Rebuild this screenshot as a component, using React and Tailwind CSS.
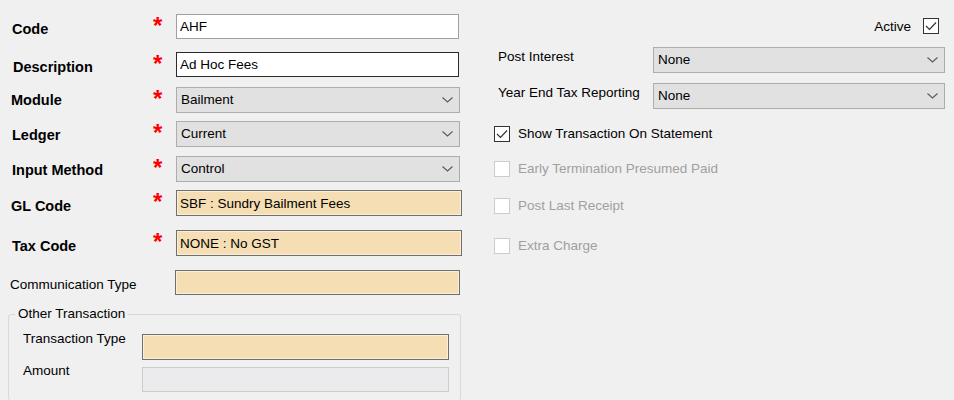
import React from 'react';

const font = 'font-["Liberation_Sans",Arial,sans-serif]';

function Chevron() {
  return (
    <svg width="11" height="6" viewBox="0 0 11 6" className="shrink-0">
      <polyline points="0.5,0.5 5.5,5 10.5,0.5" fill="none" stroke="#5a5a5a" strokeWidth="1.1" />
    </svg>
  );
}

function Check({ checked, disabled }) {
  return (
    <span
      className={
        'flex h-[16px] w-[16px] shrink-0 items-center justify-center bg-white border ' +
        (disabled ? 'border-[#cccccc]' : 'border-[#333333]')
      }
    >
      {checked && (
        <svg width="12" height="10" viewBox="0 0 12 10">
          <polyline points="1,5 4.5,8.5 11,1.5" fill="none" stroke="#333333" strokeWidth="1.2" />
        </svg>
      )}
    </span>
  );
}

function Combo({ value, className }) {
  return (
    <div
      className={
        'flex items-center justify-between border border-[#adadad] bg-[#e1e1e1] pl-[4px] pr-[6px] text-[13.5px] text-black ' +
        className
      }
    >
      <span>{value}</span>
      <Chevron />
    </div>
  );
}

function TextBox({ value, variant, className }) {
  const styles = {
    plain: 'border-[#a0a0a0] bg-white',
    focus: 'border-[#2b2b2b] bg-white',
    lookup: 'border-[#6e6e6e] bg-[#f5deb3] shadow-[inset_0_0_0_1px_#fcefd9]',
    disabled: 'border-[#cccccc] bg-[#ebebee]',
  };
  return (
    <input
      readOnly
      value={value}
      className={
        'border px-[3px] text-[13.5px] text-black outline-none ' + styles[variant] + ' ' + className
      }
    />
  );
}

function Required() {
  return (
    <span className="w-[23px] shrink-0 self-start text-[24px] font-bold leading-none text-[#ff0000]">*</span>
  );
}

function FieldRow({ label, labelClass, rowClass, children }) {
  return (
    <div className={'flex items-center ' + rowClass}>
      <div className={'w-[153px] shrink-0 text-[14.5px] font-bold text-black ' + labelClass}>{label}</div>
      <Required />
      {children}
    </div>
  );
}

function CheckRow({ label, checked, disabled, rowClass }) {
  return (
    <div className={'flex items-center gap-[8px] ' + rowClass}>
      <Check checked={checked} disabled={disabled} />
      <span className={'text-[13.5px] ' + (disabled ? 'text-[#a0a0a0]' : 'text-black')}>{label}</span>
    </div>
  );
}

export default function App() {
  return (
    <div className={'flex h-[400px] w-[954px] overflow-hidden bg-[#f0f0f0] ' + font}>
      {/* left column: transaction code fields */}
      <div className="flex w-[470px] shrink-0 flex-col pt-[14px]">
        <FieldRow label="Code" labelClass="pl-[12px] pt-[7px]" rowClass="h-[25px]">
          <TextBox value="AHF" variant="plain" className="h-[25px] w-[283px]" />
        </FieldRow>
        <FieldRow label="Description" labelClass="pl-[13px] pt-[7px]" rowClass="mt-[13px] h-[25px]">
          <TextBox value="Ad Hoc Fees" variant="focus" className="h-[25px] w-[283px]" />
        </FieldRow>
        <FieldRow label="Module" labelClass="pl-[11px] pt-[2px]" rowClass="mt-[10px] h-[26px]">
          <Combo value="Bailment" className="h-[26px] w-[284px]" />
        </FieldRow>
        <FieldRow label="Ledger" labelClass="pl-[12px] pt-[4px]" rowClass="mt-[8px] h-[26px]">
          <Combo value="Current" className="h-[26px] w-[284px]" />
        </FieldRow>
        <FieldRow label="Input Method" labelClass="pl-[12px] pt-[4px]" rowClass="mt-[9px] h-[26px]">
          <Combo value="Control" className="h-[26px] w-[284px]" />
        </FieldRow>
        <FieldRow label="GL Code" labelClass="pl-[11px] pt-[8px]" rowClass="mt-[8px] h-[26px]">
          <TextBox value="SBF : Sundry Bailment Fees" variant="lookup" className="h-[26px] w-[286px]" />
        </FieldRow>
        <FieldRow label="Tax Code" labelClass="pl-[12px] pt-[8px]" rowClass="mt-[14px] h-[26px]">
          <TextBox value="NONE : No GST" variant="lookup" className="h-[26px] w-[286px]" />
        </FieldRow>
        <div className="mt-[14px] flex h-[25px] items-center">
          <div className="w-[175px] shrink-0 pl-[10px] pt-[6px] text-[13.5px] text-black">Communication Type</div>
          <TextBox value="" variant="lookup" className="h-[25px] w-[285px]" />
        </div>

        <fieldset className="mt-[11px] ml-[8px] w-[453px] rounded-[3px] border border-[#d9d9d9] pb-[8px]">
          <legend className="ml-[6px] px-[3px] text-[13.5px] leading-[16px] text-black">Other Transaction</legend>
          <div className="mt-[12px] flex items-start">
            <div className="-mt-[3px] w-[133px] shrink-0 pl-[14px] text-[13.5px] leading-[16px] text-black">Transaction Type</div>
            <TextBox value="" variant="lookup" className="h-[26px] w-[307px]" />
          </div>
          <div className="mt-[7px] flex items-start">
            <div className="-mt-[4px] w-[133px] shrink-0 pl-[14px] text-[13.5px] leading-[16px] text-black">Amount</div>
            <TextBox value="" variant="disabled" className="h-[25px] w-[307px]" />
          </div>
        </fieldset>
      </div>

      {/* right column: posting options */}
      <div className="ml-[24px] flex w-[452px] shrink-0 flex-col pt-[18px]">
        <div className="flex h-[16px] items-center justify-end gap-[12px] pr-[7px]">
          <span className="pt-[2px] text-[13.5px] text-black">Active</span>
          <Check checked />
        </div>
        <div className="mt-[13px] flex h-[26px] items-start">
          <div className="w-[159px] shrink-0 pl-[4px] text-[13.5px] text-black">Post Interest</div>
          <Combo value="None" className="h-[26px] w-[292px]" />
        </div>
        <div className="mt-[10px] flex h-[26px] items-start">
          <div className="w-[159px] shrink-0 pl-[4px] text-[13.5px] text-black">Year End Tax Reporting</div>
          <Combo value="None" className="h-[26px] w-[292px]" />
        </div>
        <CheckRow label="Show Transaction On Statement" checked rowClass="mt-[16px] h-[18px]" />
        <CheckRow label="Early Termination Presumed Paid" disabled rowClass="mt-[17px] h-[18px]" />
        <CheckRow label="Post Last Receipt" disabled rowClass="mt-[19px] h-[18px]" />
        <CheckRow label="Extra Charge" disabled rowClass="mt-[22px] h-[18px]" />
      </div>
    </div>
  );
}
